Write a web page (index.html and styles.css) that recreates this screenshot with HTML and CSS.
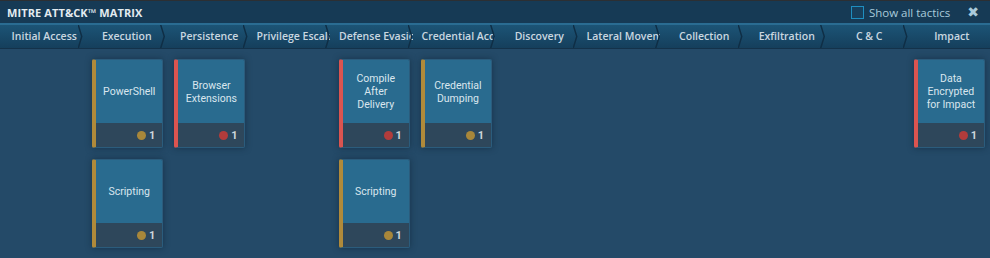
FILE: index.html
```html
<!DOCTYPE html>
<html lang="en">

<head>
  <meta charset="UTF-8">
  <meta name="viewport" content="width=device-width, initial-scale=1.0">
  <title>MITRE ATT&amp;CK Matrix</title>
  <link rel="stylesheet" href="styles.css">
</head>

<body>
  <header class="barra-titulo">
    <div class="titulo">MITRE ATT&amp;CK&trade; MATRIX</div>
    <div class="acoes">
      <label class="mostrar-todas">
        <span class="caixa"></span>
        Show all tactics
      </label>
      <span class="fechar">&#10006;</span>
    </div>
  </header>

  <nav class="taticas">
    <div class="tatica">Initial Access</div>
    <div class="tatica">Execution</div>
    <div class="tatica">Persistence</div>
    <div class="tatica">Privilege Escalation</div>
    <div class="tatica">Defense Evasion</div>
    <div class="tatica">Credential Access</div>
    <div class="tatica">Discovery</div>
    <div class="tatica">Lateral Movement</div>
    <div class="tatica">Collection</div>
    <div class="tatica">Exfiltration</div>
    <div class="tatica">C &amp; C</div>
    <div class="tatica">Impact</div>
  </nav>

  <div class="matriz">
    <div class="coluna"></div>

    <div class="coluna">
      <div class="tecnica amarelo">
        <div class="nome">PowerShell</div>
        <div class="rodape"><span class="ponto"></span>1</div>
      </div>
      <div class="tecnica amarelo">
        <div class="nome">Scripting</div>
        <div class="rodape"><span class="ponto"></span>1</div>
      </div>
    </div>

    <div class="coluna">
      <div class="tecnica vermelho">
        <div class="nome">Browser Extensions</div>
        <div class="rodape"><span class="ponto"></span>1</div>
      </div>
    </div>

    <div class="coluna"></div>

    <div class="coluna">
      <div class="tecnica vermelho">
        <div class="nome">Compile After Delivery</div>
        <div class="rodape"><span class="ponto"></span>1</div>
      </div>
      <div class="tecnica amarelo">
        <div class="nome">Scripting</div>
        <div class="rodape"><span class="ponto"></span>1</div>
      </div>
    </div>

    <div class="coluna">
      <div class="tecnica amarelo">
        <div class="nome">Credential Dumping</div>
        <div class="rodape"><span class="ponto"></span>1</div>
      </div>
    </div>

    <div class="coluna"></div>
    <div class="coluna"></div>
    <div class="coluna"></div>
    <div class="coluna"></div>
    <div class="coluna"></div>

    <div class="coluna">
      <div class="tecnica vermelho">
        <div class="nome">Data Encrypted for Impact</div>
        <div class="rodape"><span class="ponto"></span>1</div>
      </div>
    </div>
  </div>
</body>

</html>
```

FILE: styles.css
```css
* {
  box-sizing: border-box;
}

body {
  font-family: "Open Sans", Arial, sans-serif;
  margin: 0px;
  padding: 0px;
  background-color: #244a68;
  height: 258px;
  overflow: hidden;
}

.barra-titulo {
  display: flex;
  justify-content: space-between;
  align-items: center;
  height: 25px;
  padding: 0px 11px 0px 7px;
  background-color: #163a55;
  border-top: 1px solid #2c2f33;
  border-bottom: 2px solid #2a6c92;
}

.titulo {
  color: #e3ebf0;
  font-size: 11px;
  font-weight: bold;
  letter-spacing: 0.1px;
}

.acoes {
  display: flex;
  align-items: center;
}

.mostrar-todas {
  display: flex;
  align-items: center;
  color: #a9cadb;
  font-size: 11.5px;
  margin-right: 17px;
}

.caixa {
  width: 13px;
  height: 13px;
  border: 1px solid #1f8ec0;
  background-color: #173f5c;
  margin-right: 5px;
}

.fechar {
  color: #a9cadb;
  font-size: 14px;
  font-family: "DejaVu Sans", sans-serif;
  font-weight: bold;
}

.taticas {
  display: grid;
  grid-template-columns: repeat(12, 1fr);
  height: 24px;
  background: linear-gradient(#1c5476, #153f5c);
  border-bottom: 1px solid #14324a;
}

.tatica {
  position: relative;
  display: block;
  padding: 0px 3px 0px 9px;
  line-height: 23px;
  text-align: center;
  color: #c9d7e0;
  font-size: 10.5px;
  font-weight: 600;
  white-space: nowrap;
  overflow: hidden;
}

.tatica::after {
  content: "";
  position: absolute;
  right: 0px;
  top: 0px;
  width: 5px;
  height: 100%;
  background-color: #0f2e45;
  clip-path: polygon(0 0, 30% 0, 100% 50%, 30% 100%, 0 100%, 70% 50%);
}

.tatica:last-child::after {
  display: none;
}

.matriz {
  display: grid;
  grid-template-columns: repeat(12, 1fr);
  column-gap: 11px;
  padding: 10px 5px 0px 10px;
}

.coluna {
  display: flex;
  flex-direction: column;
  gap: 11px;
}

.tecnica {
  display: flex;
  flex-direction: column;
  height: 89px;
  border: 1px solid #2b5c7c;
  border-left: 4px solid #b08a3a;
  border-radius: 2px;
  box-shadow: 0px 0px 6px rgba(10, 30, 45, 0.5);
  overflow: hidden;
  font-family: Roboto, Arial, sans-serif;
}

.tecnica.vermelho {
  border-left-color: #db5450;
}

.nome {
  flex: 1;
  display: flex;
  align-items: center;
  justify-content: center;
  text-align: center;
  padding: 0px 6px;
  background-color: #296b8f;
  color: #d9e6ee;
  font-size: 10.5px;
  line-height: 13px;
}

.rodape {
  display: flex;
  align-items: center;
  justify-content: flex-end;
  height: 24px;
  padding-right: 7px;
  background-color: #2e475b;
  color: #cdd6dc;
  font-size: 11px;
  font-weight: bold;
}

.ponto {
  width: 9px;
  height: 9px;
  border-radius: 50%;
  background-color: #a8873a;
  margin-right: 3px;
}

.vermelho .ponto {
  background-color: #b23c3b;
}
```
